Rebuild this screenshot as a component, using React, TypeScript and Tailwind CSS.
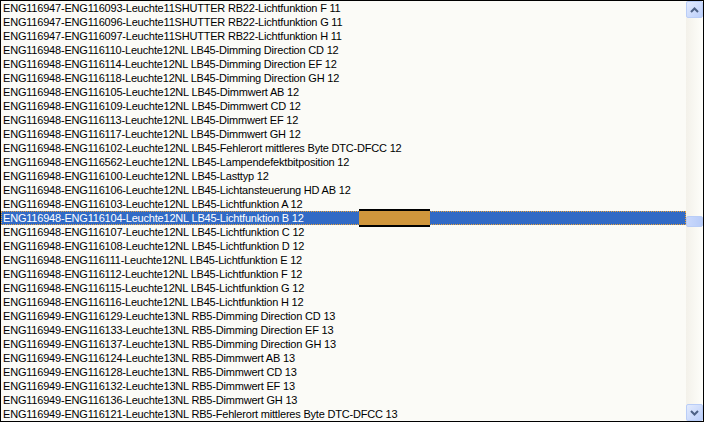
import React from "react";

const rows = [
  "ENG116947-ENG116093-Leuchte11SHUTTER RB22-Lichtfunktion F 11",
  "ENG116947-ENG116096-Leuchte11SHUTTER RB22-Lichtfunktion G 11",
  "ENG116947-ENG116097-Leuchte11SHUTTER RB22-Lichtfunktion H 11",
  "ENG116948-ENG116110-Leuchte12NL LB45-Dimming Direction CD 12",
  "ENG116948-ENG116114-Leuchte12NL LB45-Dimming Direction EF 12",
  "ENG116948-ENG116118-Leuchte12NL LB45-Dimming Direction GH 12",
  "ENG116948-ENG116105-Leuchte12NL LB45-Dimmwert AB 12",
  "ENG116948-ENG116109-Leuchte12NL LB45-Dimmwert CD 12",
  "ENG116948-ENG116113-Leuchte12NL LB45-Dimmwert EF 12",
  "ENG116948-ENG116117-Leuchte12NL LB45-Dimmwert GH 12",
  "ENG116948-ENG116102-Leuchte12NL LB45-Fehlerort mittleres Byte DTC-DFCC 12",
  "ENG116948-ENG116562-Leuchte12NL LB45-Lampendefektbitposition 12",
  "ENG116948-ENG116100-Leuchte12NL LB45-Lasttyp 12",
  "ENG116948-ENG116106-Leuchte12NL LB45-Lichtansteuerung HD AB 12",
  "ENG116948-ENG116103-Leuchte12NL LB45-Lichtfunktion A 12",
  "ENG116948-ENG116104-Leuchte12NL LB45-Lichtfunktion B 12",
  "ENG116948-ENG116107-Leuchte12NL LB45-Lichtfunktion C 12",
  "ENG116948-ENG116108-Leuchte12NL LB45-Lichtfunktion D 12",
  "ENG116948-ENG116111-Leuchte12NL LB45-Lichtfunktion E 12",
  "ENG116948-ENG116112-Leuchte12NL LB45-Lichtfunktion F 12",
  "ENG116948-ENG116115-Leuchte12NL LB45-Lichtfunktion G 12",
  "ENG116948-ENG116116-Leuchte12NL LB45-Lichtfunktion H 12",
  "ENG116949-ENG116129-Leuchte13NL RB5-Dimming Direction CD 13",
  "ENG116949-ENG116133-Leuchte13NL RB5-Dimming Direction EF 13",
  "ENG116949-ENG116137-Leuchte13NL RB5-Dimming Direction GH 13",
  "ENG116949-ENG116124-Leuchte13NL RB5-Dimmwert AB 13",
  "ENG116949-ENG116128-Leuchte13NL RB5-Dimmwert CD 13",
  "ENG116949-ENG116132-Leuchte13NL RB5-Dimmwert EF 13",
  "ENG116949-ENG116136-Leuchte13NL RB5-Dimmwert GH 13",
  "ENG116949-ENG116121-Leuchte13NL RB5-Fehlerort mittleres Byte DTC-DFCC 13",
];

const SELECTED = 15;

function ArrowBtn({ up }: { up: boolean }) {
  return (
    <div className="h-[17px] w-[17px] rounded-[2px] border border-[#b9cdf7] bg-gradient-to-br from-[#e3ebfd] to-[#bccffa] flex items-center justify-center">
      <svg width="9" height="6" viewBox="0 0 9 6">
        {up ? (
          <path d="M1 5 L4.5 1.5 L8 5" stroke="#4d6185" strokeWidth="2" fill="none" />
        ) : (
          <path d="M1 1 L4.5 4.5 L8 1" stroke="#4d6185" strokeWidth="2" fill="none" />
        )}
      </svg>
    </div>
  );
}

export default function App() {
  return (
    <div
      className="w-[704px] h-[422px] border border-black bg-[#fbfbf7] flex overflow-hidden"
      style={{ fontFamily: '"Liberation Sans", Arial, sans-serif' }}
    >
      <div className="relative flex-1 flex flex-col">
        {rows.map((r, i) => (
          <div
            key={i}
            className={
              i === SELECTED
                ? "h-[14px] shrink-0 pl-[1px] text-[11px] tracking-[-0.2px] leading-[12px] bg-[#316ac5] text-white border border-dotted border-[#e8a33c] whitespace-nowrap"
                : "h-[14px] shrink-0 pl-[2px] pt-[1px] text-[11px] tracking-[-0.2px] leading-[12px] text-black whitespace-nowrap"
            }
          >
            {r}
          </div>
        ))}
        <div className="absolute left-[358px] top-[208px] w-[71px] h-[18px] border-y-2 border-black bg-[#d0963c]" />
      </div>
      <div className="w-[17px] shrink-0 flex flex-col justify-between bg-gradient-to-r from-[#f3f1ea] to-[#fefefa]">
        <ArrowBtn up />
        <div className="flex-1 relative">
          <div className="absolute left-0 top-[198px] w-[17px] h-[11px] rounded-[2px] border border-[#b9cdf7] bg-gradient-to-r from-[#c9d8fc] to-[#b8ccf8]" />
        </div>
        <ArrowBtn up={false} />
      </div>
    </div>
  );
}
